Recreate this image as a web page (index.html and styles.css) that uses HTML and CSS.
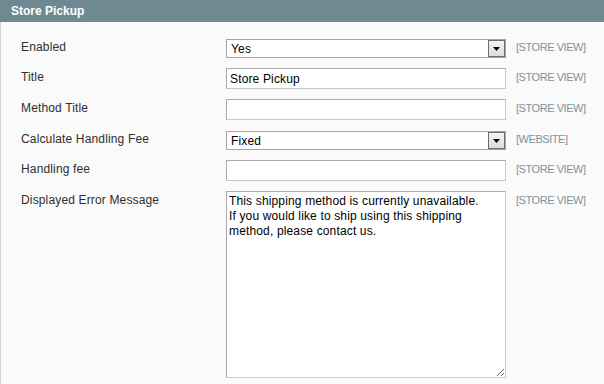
FILE: index.html
```html
<!DOCTYPE html>
<html lang="en">
<head>
    <meta charset="UTF-8">
    <meta name="viewport" content="width=device-width, initial-scale=1.0">
    <title>Store Pickup</title>

<link rel="stylesheet" href="styles.css">

</head>
<body>
    <div class="section">
     <div class="section-head">
       <h4>Store Pickup</h4>
     </div>
     <div class="fieldset">

      <div class="row">
        <label class="label" for="enabled">Enabled</label>
        <div class="value select-wrap">
          <select id="enabled" class="select">
            <option>Yes</option>
            <option>No</option>
          </select>
          <span class="arrow"><svg width="7" height="4" viewBox="0 0 7 4"><path d="M0 0h7L3.5 4z" fill="#000"/></svg></span>
        </div>
        <span class="scope">[STORE VIEW]</span>
      </div>

      <div class="row">
        <label class="label" for="title">Title</label>
        <div class="value">
          <input type="text" id="title" class="input-text" value="Store Pickup">
        </div>
        <span class="scope">[STORE VIEW]</span>
      </div>

      <div class="row">
        <label class="label" for="method-title">Method Title</label>
        <div class="value">
          <input type="text" id="method-title" class="input-text" value="">
        </div>
        <span class="scope">[STORE VIEW]</span>
      </div>

      <div class="row">
        <label class="label" for="handling-type">Calculate Handling Fee</label>
        <div class="value select-wrap">
          <select id="handling-type" class="select">
            <option>Fixed</option>
            <option>Percent</option>
          </select>
          <span class="arrow"><svg width="7" height="4" viewBox="0 0 7 4"><path d="M0 0h7L3.5 4z" fill="#000"/></svg></span>
        </div>
        <span class="scope">[WEBSITE]</span>
      </div>

      <div class="row">
        <label class="label" for="handling-fee">Handling fee</label>
        <div class="value">
          <input type="text" id="handling-fee" class="input-text" value="">
        </div>
        <span class="scope">[STORE VIEW]</span>
      </div>

      <div class="row">
        <label class="label" for="error-msg">Displayed Error Message</label>
        <div class="value">
          <textarea id="error-msg" class="textarea">This shipping method is currently unavailable.
If you would like to ship using this shipping method, please contact us.</textarea>
        </div>
        <span class="scope">[STORE VIEW]</span>
      </div>

     </div>
    </div>
</body>
</html>
```

FILE: styles.css
```css
 body{
   margin: 0;
   font-family: "Liberation Sans", Arial, Helvetica, sans-serif;
   font-size: 12px;
   letter-spacing: 0.15px;
   color: #2f2f2f;
   background-color: #fafafa;
   overflow: hidden;
 }

 .section-head{
   height: 22px;
   background-color: #6f8992;
   padding: 0 11px;
 }

 .section-head h4{
   margin: 0;
   color: #fff;
   font-size: 12px;
   font-weight: bold;
   line-height: 22px;
   letter-spacing: 0;
 }

 .fieldset{
   box-sizing: border-box;
   min-height: calc(100vh - 22px);
   background-color: #fafafa;
   border-left: 1px solid #d6d6d6;
   padding: 16px 0 0 20px;
 }

 .row{
   display: flex;
   align-items: flex-start;
   padding-bottom: 10px;
 }

 .label{
   width: 205px;
   flex-shrink: 0;
   padding-top: 1px;
   line-height: 16px;
 }

 .value{
   width: 280px;
   flex-shrink: 0;
 }

 .scope{
   margin-left: 10px;
   padding-top: 2px;
   font-size: 11px;
   letter-spacing: -0.45px;
   line-height: 15px;
   color: #7f939c;
 }

 .input-text{
   box-sizing: border-box;
   width: 280px;
   height: 21px;
   margin: 0;
   padding: 0 3px;
   border: 1px solid #aaa;
   border-color: #aaa #c8c8c8 #c8c8c8 #aaa;
   background-color: #fff;
   font-family: "Liberation Sans", Arial, sans-serif;
   font-size: 12px;
   letter-spacing: 0.15px;
   color: #000;
   outline: none;
 }

 .select-wrap{
   position: relative;
   margin-top: 1px;
 }

 .select{
   box-sizing: border-box;
   display: block;
   width: 280px;
   height: 19px;
   margin: 0;
   padding: 0 0 0 4px;
   border: 1px solid #a5a5a5;
   border-radius: 0;
   background-color: #fff;
   -webkit-appearance: none;
   appearance: none;
   font-family: "Liberation Sans", Arial, sans-serif;
   font-size: 12px;
   letter-spacing: 0.15px;
   color: #000;
   outline: none;
 }

 .arrow{
   position: absolute;
   top: 1px;
   right: 1px;
   box-sizing: border-box;
   width: 17px;
   height: 17px;
   border: 1px solid #6e6e6e;
   background: linear-gradient(#f4f4f4, #dcdcdc);
   display: flex;
   align-items: center;
   justify-content: center;
   padding-top: 1px;
   pointer-events: none;
 }

 .arrow svg{
   display: block;
 }

 .textarea{
   box-sizing: border-box;
   display: block;
   width: 280px;
   height: 187px;
   margin: 0;
   padding: 2px;
   border: 1px solid #aaa;
   border-color: #aaa #c8c8c8 #c8c8c8 #aaa;
   background-color: #fff;
   font-family: "Liberation Sans", Arial, sans-serif;
   font-size: 12px;
   letter-spacing: 0.15px;
   line-height: 15px;
   color: #000;
   outline: none;
   overflow: hidden;
 }
```
